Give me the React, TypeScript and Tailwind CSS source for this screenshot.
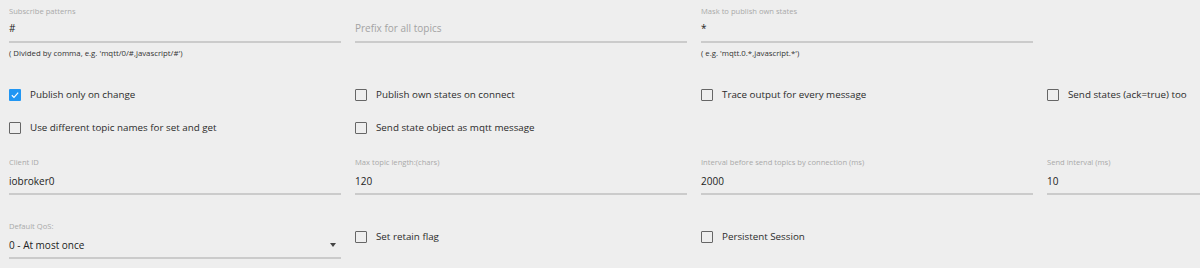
import type { ReactNode } from "react";

const font = { fontFamily: '"Open Sans", "Liberation Sans", sans-serif' };

function FieldLabel({ children }: { children?: ReactNode }) {
  return (
    <div className="h-[10px] truncate text-[7.6px] leading-[10px] text-[#a9a9a9]">
      {children}
    </div>
  );
}

function Underline() {
  return <div className="h-[2px] w-full bg-[#cbcbcb]" />;
}

function HelpText({ children }: { children: ReactNode }) {
  return (
    <div className="mt-[5px] h-[10px] text-[7.8px] font-medium leading-[10px] text-[#333]">
      {children}
    </div>
  );
}

function TextField({
  label,
  value,
  placeholder,
  help,
  gap = "mt-[5px]",
  lineGap = "mt-[6px]",
}: {
  label?: string;
  value?: string;
  placeholder?: string;
  help?: string;
  gap?: string;
  lineGap?: string;
}) {
  return (
    <div>
      <FieldLabel>{label}</FieldLabel>
      <div
        className={`${gap} h-[14px] text-[10px] leading-[14px] ${
          value ? "text-[#222]" : "text-[#a3a3a3]"
        }`}
      >
        {value ?? placeholder}
      </div>
      <div className={lineGap}>
        <Underline />
      </div>
      {help ? <HelpText>{help}</HelpText> : null}
    </div>
  );
}

function Checkbox({ label, checked }: { label: string; checked?: boolean }) {
  return (
    <div className="flex h-[14px] items-center">
      {checked ? (
        <span className="flex h-[12px] w-[12px] shrink-0 items-center justify-center rounded-[1px] bg-[#2196f3]">
          <svg viewBox="0 0 12 12" className="h-[10px] w-[10px]">
            <path
              d="M2.2 6.3 4.8 8.8 9.8 3.2"
              fill="none"
              stroke="#fff"
              strokeWidth="1.4"
            />
          </svg>
        </span>
      ) : (
        <span className="h-[12px] w-[12px] shrink-0 rounded-[1px] border-[1.5px] border-[#666]" />
      )}
      <span className="ml-[9px] whitespace-nowrap text-[9.8px] leading-[14px] text-[#2b2b2b]">
        {label}
      </span>
    </div>
  );
}

const row = "grid grid-cols-[332px_332px_332px_332px] gap-x-[14px]";

export default function App() {
  return (
    <div
      className="h-[268px] w-[1200px] overflow-hidden bg-[#eeeeee] pl-[9px] pt-[6px]"
      style={font}
    >
      <div className={row}>
        <TextField
          label="Subscribe patterns"
          value="#"
          help="( Divided by comma, e.g. 'mqtt/0/#,javascript/#')"
        />
        <TextField placeholder="Prefix for all topics" />
        <TextField
          label="Mask to publish own states"
          value="*"
          help="( e.g. 'mqtt.0.*,javascript.*')"
        />
        <div />
      </div>

      <div className={`${row} mt-[30px]`}>
        <Checkbox label="Publish only on change" checked />
        <Checkbox label="Publish own states on connect" />
        <Checkbox label="Trace output for every message" />
        <Checkbox label="Send states (ack=true) too" />
      </div>

      <div className={`${row} mt-[19px]`}>
        <Checkbox label="Use different topic names for set and get" />
        <Checkbox label="Send state object as mqtt message" />
      </div>

      <div className={`${row} mt-[22px]`}>
        <TextField label="Client ID" value="iobroker0" gap="mt-[7px]" lineGap="mt-[5px]" />
        <TextField label="Max topic length:(chars)" value="120" gap="mt-[7px]" lineGap="mt-[5px]" />
        <TextField
          label="Interval before send topics by connection (ms)"
          value="2000"
          gap="mt-[7px]"
          lineGap="mt-[5px]"
        />
        <TextField label="Send interval (ms)" value="10" gap="mt-[7px]" lineGap="mt-[5px]" />
      </div>

      <div className={`${row} mt-[26px]`}>
        <div>
          <FieldLabel>Default QoS:</FieldLabel>
          <div className="mt-[7px] flex h-[14px] items-center justify-between text-[10px] leading-[14px] text-[#222]">
            <span>0 - At most once</span>
            <span className="mr-[5px] h-0 w-0 border-x-[3.5px] border-t-[4px] border-x-transparent border-t-[#444]" />
          </div>
          <div className="mt-[5px]">
            <Underline />
          </div>
        </div>
        <div className="pt-[9px]">
          <Checkbox label="Set retain flag" />
        </div>
        <div className="pt-[9px]">
          <Checkbox label="Persistent Session" />
        </div>
        <div />
      </div>
    </div>
  );
}
